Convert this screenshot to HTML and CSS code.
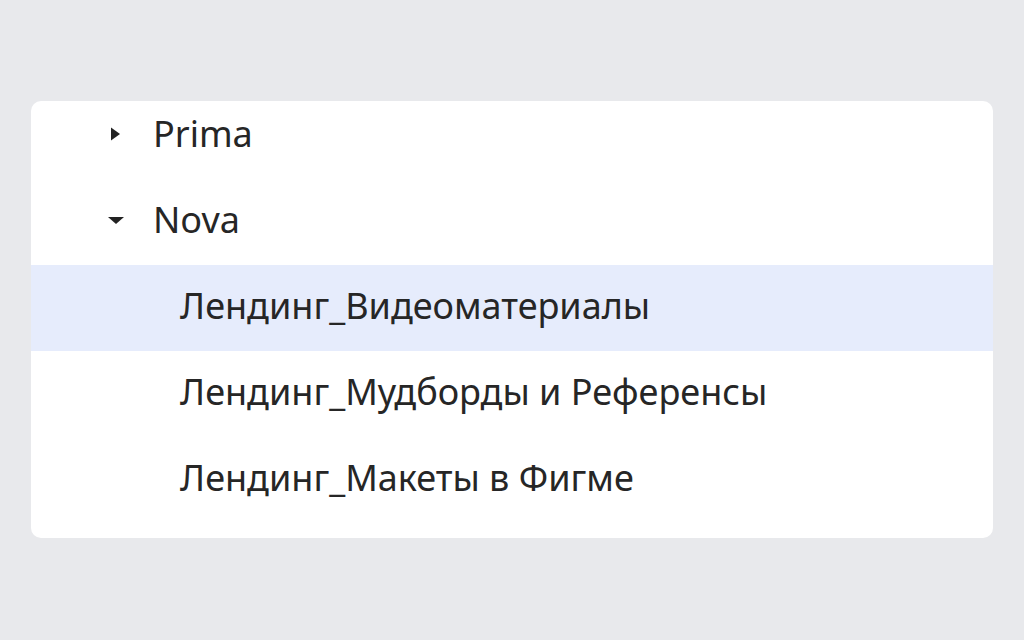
FILE: index.html
```html
<!DOCTYPE html>
<html>
<head>
<meta charset="utf-8">
<link rel="stylesheet" href="styles.css">
</head>
<body>
<div class="card">
	<ul class="tree">
		<li class="row folder">
			<svg class="arrow" width="16" height="16" viewBox="0 0 16 16"><path d="M3 1.5 L12 8 L3 14.5 Z" fill="#222"/></svg>
			<span>Prima</span>
		</li>
		<li class="row folder">
			<svg class="arrow" width="16" height="16" viewBox="0 0 16 16"><path d="M0 5 L16 5 L8 12 Z" fill="#222"/></svg>
			<span>Nova</span>
		</li>
		<li class="row leaf selected"><span>Лендинг_Видеоматериалы</span></li>
		<li class="row leaf"><span>Лендинг_Мудборды и Референсы</span></li>
		<li class="row leaf"><span>Лендинг_Макеты в Фигме</span></li>
	</ul>
</div>
</body>
</html>
```

FILE: styles.css
```css
body {
	margin: 0;
	background-color: #e8e9ec;
	font-family: "Noto Sans", "Liberation Sans", sans-serif;
}

.card {
	margin: 101px 31px 0 31px;
	background-color: #fff;
	border-radius: 10px;
	overflow: hidden;
	padding-bottom: 15px;
}

.tree {
	list-style: none;
	margin: -8px 0 0 0;
	padding: 0;
}

.row {
	display: flex;
	align-items: center;
	box-sizing: border-box;
	height: 86px;
	padding-bottom: 5px;
	font-size: 36px;
	color: #262626;
}

.folder {
	padding-left: 77px;
}

.folder .arrow {
	margin-right: 29px;
	flex: none;
}

.leaf {
	padding-left: 149px;
}

.selected {
	background-color: #e6ecfc;
}
```
